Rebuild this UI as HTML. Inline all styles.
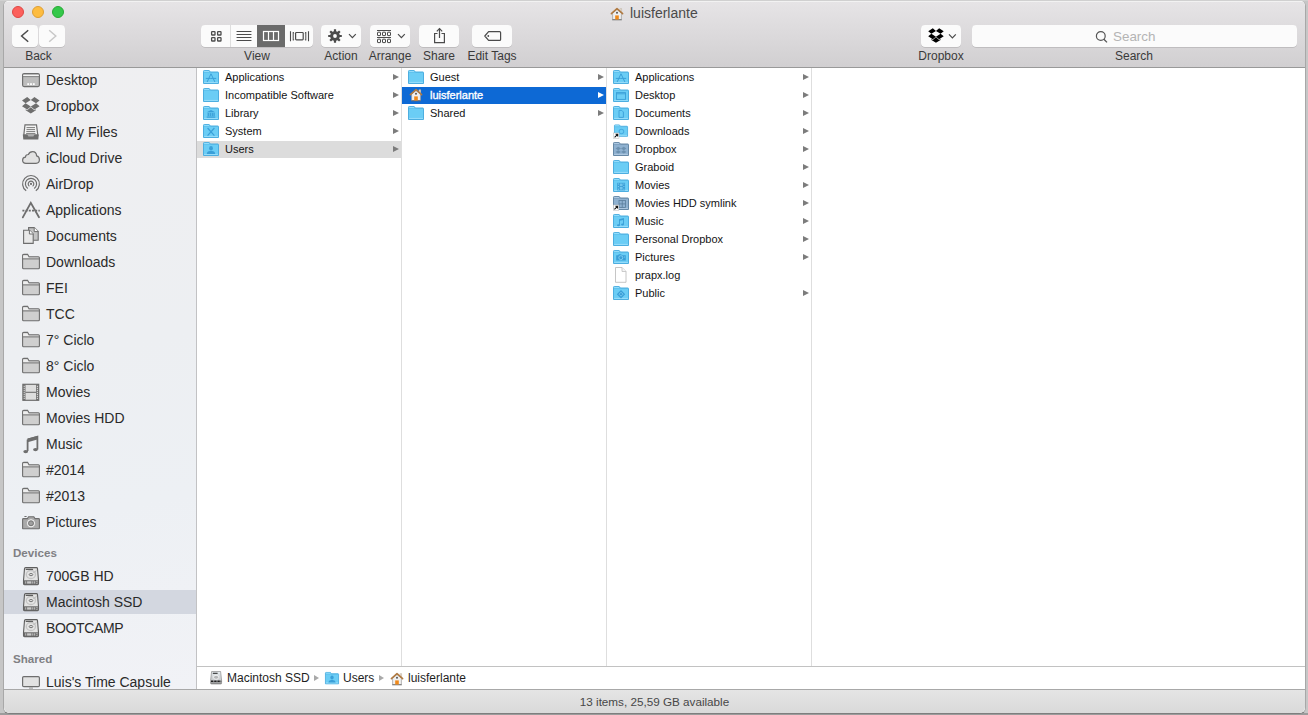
<!DOCTYPE html>
<html><head><meta charset="utf-8">
<style>
*{box-sizing:border-box}
html,body{margin:0;padding:0}
body{width:1308px;height:715px;overflow:hidden;position:relative;background:#c6c6c6;font-family:"Liberation Sans",sans-serif;color:#000}
.a{position:absolute}
svg{overflow:visible}
#frame{position:absolute;left:3px;top:1px;width:1303px;height:713px;border-radius:5px 5px 6px 6px;background:#fff;border:1px solid #a8a8a8;border-top:0;border-bottom-color:#7e7e7e}
#bstrip{position:absolute;left:0;top:713px;width:1308px;height:2px;background:#9c9c9c}
#tstrip{position:absolute;left:0;top:0;width:1308px;height:1px;background:#d0d0d0}
#toolbar{position:absolute;left:4px;top:1px;width:1301px;height:67px;border-radius:5px 5px 0 0;background:linear-gradient(#f2f2f2 0,#f2f2f2 1px,#e6e4e6 1px,#d1cfd1 100%);border-bottom:1px solid #999}
.tl{position:absolute;top:5px;width:12px;height:12px;border-radius:50%}
.btn{position:absolute;top:24px;height:22px;background:#fbfbfb;border-radius:4px;box-shadow:0 0.5px 0.6px rgba(0,0,0,0.22)}
.btn svg{position:absolute;left:0;top:0}
.lbl{position:absolute;top:48px;height:15px;line-height:15px;font-size:12px;color:#3a3a3a;text-align:center;white-space:nowrap}
#sidebar{position:absolute;left:4px;top:68px;width:193px;height:621px;background:linear-gradient(170deg,#efeff1 0%,#edeff2 45%,#edf0f4 70%,#f1f2f6 100%);border-right:1px solid #c2c2c4;overflow:hidden}
.si{position:absolute;left:0px;width:192px;height:26px;font-size:14px;color:#2a2a2a}
.si span{position:absolute;left:42px;top:3px;line-height:18px;white-space:nowrap}
.si svg{position:absolute;left:18px;top:4px}
.selrow{background:#d3d7e0;height:24px}
.sh{position:absolute;left:9px;font-size:11.6px;font-weight:bold;color:#808084;line-height:14px}
.col{position:absolute;top:68px;height:598px;border-right:1px solid #dedede;background:#fff;overflow:hidden}
.r{position:absolute;left:0;height:17px;width:204px;font-size:11px;color:#141414}
.r span{position:absolute;left:28px;top:2px;line-height:13px;white-space:nowrap}
.r svg{position:absolute;left:6px;top:1px}
.r .ar{position:absolute;left:196px;top:5px;width:0;height:0;border-left:6px solid #7c7c7c;border-top:3.5px solid transparent;border-bottom:3.5px solid transparent}
.sel{background:#0d69d5;color:#fff}
.sel span{-webkit-text-stroke:0.35px #fff}
.sel .ar{border-left-color:#fff}
.gr{background:#dcdcdc}
#pathbar{position:absolute;left:197px;top:666px;width:1108px;height:23px;background:#fff;border-top:1px solid #c2c2c2;font-size:12px;color:#1e1e1e}
#pathbar span{position:absolute;top:4px;line-height:14px;white-space:nowrap}
#pathbar svg{position:absolute}
.parr{position:absolute;top:8px;width:0;height:0;border-left:5px solid #a9a9a9;border-top:3.5px solid transparent;border-bottom:3.5px solid transparent}
#status{position:absolute;left:4px;top:689px;width:1301px;height:24px;border-radius:0 0 6px 6px;background:linear-gradient(#e5e5e5,#d9d9d9);border-top:1px solid #a8a8a8;font-size:11.7px;color:#474747}
</style></head><body>
<div id="tstrip"></div><div id="bstrip"></div><div id="frame"></div>
<div id="toolbar"><div class="tl" style="left:8px;background:#fc605c;border:0.6px solid #df4744"></div><div class="tl" style="left:28px;background:#fdbc40;border:0.6px solid #de9f34"></div><div class="tl" style="left:48px;background:#34c84a;border:0.6px solid #27aa35"></div><div class="a" style="left:607px;top:5px"><svg width="13" height="12" viewBox="0 0 13 12" style=""><rect x="9" y="0.8" width="1.8" height="3.4" fill="#ebe3d8" stroke="#b9ab9a" stroke-width="0.5"/><path d="M1.6 5.2L6 1.4L10.4 5.2V11.5H1.6Z" fill="#f0f0f0" stroke="#9c9c9c" stroke-width="0.7"/><path d="M0.4 5.6L6 0.6L11.6 5.6" fill="none" stroke="#b07a42" stroke-width="1.6" stroke-linejoin="round" stroke-linecap="round"/><path d="M1.2 11.8H10.8" stroke="#6a6a6a" stroke-width="0.9"/><rect x="4.2" y="7.4" width="3.6" height="4.1" fill="#f0891a"/><circle cx="6" cy="4.8" r="0.95" fill="#4a4a4a"/></svg></div><div class="a" style="left:626px;top:4px;font-size:14px;line-height:16px;color:#4a4a4a;white-space:nowrap">luisferlante</div><div class="btn" style="left:8px;width:26px"><svg width="26" height="22"><path d="M16.2 5.2L9.6 11L16.2 16.8" fill="none" stroke="#4b4b4b" stroke-width="1.5"/></svg></div><div class="btn" style="left:35px;width:26px"><svg width="26" height="22"><path d="M10.2 5.2L16.8 11L10.2 16.8" fill="none" stroke="#c9c9c9" stroke-width="1.5"/></svg></div><div class="lbl" style="left:8px;width:53px">Back</div><div class="btn" style="left:197px;width:112px;overflow:hidden"><div class="a" style="left:29px;top:0;width:1px;height:22px;background:#dedede"></div><div class="a" style="left:56px;top:0;width:28px;height:22px;background:#6b6b6b"></div><svg width="112" height="22"><g fill="none" stroke="#4b4b4b" stroke-width="1.3"><rect x="10.6" y="6.6" width="3.4" height="3.4" rx="0.6"/><rect x="16.6" y="6.6" width="3.4" height="3.4" rx="0.6"/><rect x="10.6" y="12.6" width="3.4" height="3.4" rx="0.6"/><rect x="16.6" y="12.6" width="3.4" height="3.4" rx="0.6"/><path d="M36 6.5H50M36 9.5H50M36 12.5H50M36 15.5H50" stroke-width="1.2" stroke-linecap="round"/></g><g fill="none" stroke="#fff" stroke-width="1.2"><rect x="62.5" y="6.5" width="15" height="9"/><path d="M67.5 6.5V15.5M72.5 6.5V15.5"/></g><g fill="none" stroke="#4b4b4b" stroke-width="1.1"><path d="M89.5 6.2V16.2M107.5 6.2V16.2"/><rect x="94.6" y="7.5" width="7.6" height="7.4" rx="0.8" stroke-width="1.2"/><path d="M92.2 7V15.4M104.8 7V15.4" stroke-width="1"/></g><g fill="#4b4b4b"><path d="M92 7L93.6 8.2H92Z M92 15.6L93.6 14.4H92Z M105 7L103.4 8.2H105Z M105 15.6L103.4 14.4H105Z"/></g></svg></div><div class="lbl" style="left:197px;width:112px">View</div><div class="btn" style="left:317px;width:40px"><svg width="40" height="22"><path d="M12.88 6.23L12.90 4.19L15.10 4.19L15.12 6.23L16.58 6.84L18.04 5.41L19.59 6.96L18.16 8.42L18.77 9.88L20.81 9.90L20.81 12.10L18.77 12.12L18.16 13.58L19.59 15.04L18.04 16.59L16.58 15.16L15.12 15.77L15.10 17.81L12.90 17.81L12.88 15.77L11.42 15.16L9.96 16.59L8.41 15.04L9.84 13.58L9.23 12.12L7.19 12.10L7.19 9.90L9.23 9.88L9.84 8.42L8.41 6.96L9.96 5.41L11.42 6.84Z" fill="#4b4b4b"/><circle cx="14" cy="11" r="1.9" fill="#fbfbfb"/><path d="M28 9.2L31.4 12.6L34.8 9.2" fill="none" stroke="#4b4b4b" stroke-width="1.2"/></svg></div><div class="lbl" style="left:312px;width:50px">Action</div><div class="btn" style="left:366px;width:40px"><svg width="40" height="22"><path d="M7 5.5H21M7 12.5H21" stroke="#4b4b4b" stroke-width="1"/><rect x="7.5" y="7.2" width="3" height="3.4" rx="0.4" fill="none" stroke="#4b4b4b" stroke-width="1"/><rect x="12.5" y="7.2" width="3" height="3.4" rx="0.4" fill="none" stroke="#4b4b4b" stroke-width="1"/><rect x="17.5" y="7.2" width="3" height="3.4" rx="0.4" fill="none" stroke="#4b4b4b" stroke-width="1"/><rect x="7.5" y="14.2" width="3" height="3.4" rx="0.4" fill="none" stroke="#4b4b4b" stroke-width="1"/><rect x="12.5" y="14.2" width="3" height="3.4" rx="0.4" fill="none" stroke="#4b4b4b" stroke-width="1"/><rect x="17.5" y="14.2" width="3" height="3.4" rx="0.4" fill="none" stroke="#4b4b4b" stroke-width="1"/><path d="M28 9.2L31.4 12.6L34.8 9.2" fill="none" stroke="#4b4b4b" stroke-width="1.2"/></svg></div><div class="lbl" style="left:361px;width:50px">Arrange</div><div class="btn" style="left:415px;width:40px"><svg width="40" height="22"><g fill="none" stroke="#4b4b4b" stroke-width="1.2"><path d="M18.5 8.5H15.6V17.6H25.4V8.5H22.5"/><path d="M20.5 3.6V13"/><path d="M17.8 6.4L20.5 3.6L23.2 6.4"/></g></svg></div><div class="lbl" style="left:410px;width:50px">Share</div><div class="btn" style="left:468px;width:40px"><svg width="40" height="22"><path d="M12.8 11L16.6 6.6H27.6Q28.6 6.6 28.6 7.6V14.4Q28.6 15.4 27.6 15.4H16.6Z" fill="none" stroke="#4b4b4b" stroke-width="1.2" stroke-linejoin="round"/><circle cx="16.3" cy="11" r="0.9" fill="#4b4b4b"/></svg></div><div class="lbl" style="left:458px;width:60px">Edit Tags</div><div class="btn" style="left:917px;width:40px"><svg width="40" height="22"><g transform="translate(7.2 3) scale(0.363)"><path fill="#000" d="M12.6 0.6L0 8.9l8.7 7 12.7-7.8zM0 22.9l12.6 8.3 8.8-7.3-12.7-7.9zm21.4 1l8.8 7.3 12.6-8.3-8.7-7zm21.4-15L30.2.6l-8.8 7.4 12.7 7.8zM21.4 25.5l-8.8 7.3-3.7-2.5v2.8l12.5 7.5 12.5-7.5v-2.8l-3.8 2.5z"/></g><path d="M28 9.4L31.4 12.8L34.8 9.4" fill="none" stroke="#4b4b4b" stroke-width="1.2"/></svg></div><div class="lbl" style="left:907px;width:60px">Dropbox</div><div class="btn" style="left:968px;width:325px"><svg width="325" height="22"><circle cx="128.8" cy="11" r="4.4" fill="none" stroke="#555" stroke-width="1.2"/><path d="M131.9 14.2L135 17.4" stroke="#555" stroke-width="1.3"/></svg></div><div class="a" style="left:1109px;top:28px;font-size:13.4px;line-height:16px;color:#b4b4b4">Search</div><div class="lbl" style="left:1090px;width:80px">Search</div></div>
<div id="sidebar"><div class="si" style="top:0px"><svg width="18" height="18" viewBox="0 0 18 18" style=""><rect x="0.6" y="1.6" width="16.8" height="13" rx="1.5" fill="#bdbdbd" stroke="#6e6e6e" stroke-width="1.2"/><path d="M1.2 3.6H16.8" stroke="#f4f4f4" stroke-width="1.6"/><path d="M1 4.6H17" stroke="#6e6e6e" stroke-width="0.8"/><rect x="5.3" y="11.2" width="1.8" height="1.8" fill="#fff"/><rect x="8.1" y="11.2" width="1.8" height="1.8" fill="#fff"/><rect x="10.9" y="11.2" width="1.8" height="1.8" fill="#fff"/></svg><span>Desktop</span></div>
<div class="si" style="top:26px"><svg width="18" height="18" viewBox="0 0 18 18" style=""><g fill="#6e6e6e" transform="translate(0 -1.25) scale(0.411)"><path d="M12.6 0.6L0 8.9l8.7 7 12.7-7.8zM0 22.9l12.6 8.3 8.8-7.3-12.7-7.9zm21.4 1l8.8 7.3 12.6-8.3-8.7-7zm21.4-15L30.2.6l-8.8 7.4 12.7 7.8zM21.4 25.5l-8.8 7.3-3.7-2.5v2.8l12.5 7.5 12.5-7.5v-2.8l-3.8 2.5z"/></g></svg><span>Dropbox</span></div>
<div class="si" style="top:52px"><svg width="18" height="18" viewBox="0 0 18 18" style=""><path d="M3 0.8H14.5L15.8 11H1.8Z" fill="#f4f4f4" stroke="#6e6e6e" stroke-width="1.2"/><g stroke="#6e6e6e" stroke-width="0.9"><path d="M4.5 3.6H13M4.5 5.6H13M4.3 7.6H13.2M4.1 9.6H13.4"/></g><path d="M0.8 10.6H5.2L6.4 12.2H11.4L12.6 10.6H16.8L16.3 15.6H1.3Z" fill="#6e6e6e"/></svg><span>All My Files</span></div>
<div class="si" style="top:78px"><svg width="18" height="18" viewBox="0 0 18 18" style=""><path d="M4 13.3Q0.6 13.3 0.6 10.3Q0.6 7.5 3.4 7.2Q3.6 4.5 6.4 4.5Q7.6 1.6 10.6 1.6Q14.4 1.6 14.6 5.9Q17.4 6.6 17.4 9.8Q17.4 13.3 14 13.3Z" fill="#e2e2e2" stroke="#6e6e6e" stroke-width="1.2"/></svg><span>iCloud Drive</span></div>
<div class="si" style="top:104px"><svg width="18" height="18" viewBox="0 0 18 18" style=""><g fill="none" stroke="#6e6e6e" stroke-width="1.2"><path d="M4.18 14.78A8.4 8.4 0 1 1 13.82 14.78"/><path d="M5.79 12.49A5.6 5.6 0 1 1 12.21 12.49"/><path d="M7.39 10.19A2.8 2.8 0 1 1 10.61 10.19"/></g><circle cx="9" cy="7.9" r="1.1" fill="#6e6e6e"/></svg><span>AirDrop</span></div>
<div class="si" style="top:130px"><svg width="18" height="18" viewBox="0 0 18 18" style=""><g stroke="#6e6e6e" stroke-width="1.8" stroke-linecap="round" fill="none"><path d="M0.8 15.4L8.8 0.8L17 15.2"/></g><path d="M0.4 8.6H17.8" stroke="#6e6e6e" stroke-width="1.6" stroke-dasharray="2 1.2"/></svg><span>Applications</span></div>
<div class="si" style="top:156px"><svg width="18" height="18" viewBox="0 0 18 18" style=""><path d="M6.6 -0.4H12.2L16.2 3.6V12.2H6.6Z" fill="#c4c4c4" stroke="#6e6e6e" stroke-width="1.1"/><path d="M12.2 -0.4V3.6H16.2" fill="#fff" stroke="#6e6e6e" stroke-width="1"/><path d="M1.6 2.2H7.4L11.2 6V15.4H1.6Z" fill="#e8e8e8" stroke="#6e6e6e" stroke-width="1.1"/><path d="M7.4 2.2V6H11.2" fill="#fff" stroke="#6e6e6e" stroke-width="1"/></svg><span>Documents</span></div>
<div class="si" style="top:182px"><svg width="18" height="18" viewBox="0 0 18 18" style=""><g transform="translate(0 -0.7)"><path d="M0.6 2.4Q0.6 1.1 1.8 1.1H5.6L7 3.5H16.4Q17.4 3.5 17.4 4.5V14.4Q17.4 15.4 16.4 15.4H1.6Q0.6 15.4 0.6 14.4Z" fill="#cfcfcf" stroke="#6e6e6e" stroke-width="1.1"/><path d="M1.2 2.3H5.4L6.8 4.6H16.8V5.3H1.2Z" fill="#eeeeee"/><path d="M0.8 5.6H17.2" stroke="#6e6e6e" stroke-width="1"/></g></svg><span>Downloads</span></div>
<div class="si" style="top:208px"><svg width="18" height="18" viewBox="0 0 18 18" style=""><g transform="translate(0 -0.7)"><path d="M0.6 2.4Q0.6 1.1 1.8 1.1H5.6L7 3.5H16.4Q17.4 3.5 17.4 4.5V14.4Q17.4 15.4 16.4 15.4H1.6Q0.6 15.4 0.6 14.4Z" fill="#cfcfcf" stroke="#6e6e6e" stroke-width="1.1"/><path d="M1.2 2.3H5.4L6.8 4.6H16.8V5.3H1.2Z" fill="#eeeeee"/><path d="M0.8 5.6H17.2" stroke="#6e6e6e" stroke-width="1"/></g></svg><span>FEI</span></div>
<div class="si" style="top:234px"><svg width="18" height="18" viewBox="0 0 18 18" style=""><g transform="translate(0 -0.7)"><path d="M0.6 2.4Q0.6 1.1 1.8 1.1H5.6L7 3.5H16.4Q17.4 3.5 17.4 4.5V14.4Q17.4 15.4 16.4 15.4H1.6Q0.6 15.4 0.6 14.4Z" fill="#cfcfcf" stroke="#6e6e6e" stroke-width="1.1"/><path d="M1.2 2.3H5.4L6.8 4.6H16.8V5.3H1.2Z" fill="#eeeeee"/><path d="M0.8 5.6H17.2" stroke="#6e6e6e" stroke-width="1"/></g></svg><span>TCC</span></div>
<div class="si" style="top:260px"><svg width="18" height="18" viewBox="0 0 18 18" style=""><g transform="translate(0 -0.7)"><path d="M0.6 2.4Q0.6 1.1 1.8 1.1H5.6L7 3.5H16.4Q17.4 3.5 17.4 4.5V14.4Q17.4 15.4 16.4 15.4H1.6Q0.6 15.4 0.6 14.4Z" fill="#cfcfcf" stroke="#6e6e6e" stroke-width="1.1"/><path d="M1.2 2.3H5.4L6.8 4.6H16.8V5.3H1.2Z" fill="#eeeeee"/><path d="M0.8 5.6H17.2" stroke="#6e6e6e" stroke-width="1"/></g></svg><span>7° Ciclo</span></div>
<div class="si" style="top:286px"><svg width="18" height="18" viewBox="0 0 18 18" style=""><g transform="translate(0 -0.7)"><path d="M0.6 2.4Q0.6 1.1 1.8 1.1H5.6L7 3.5H16.4Q17.4 3.5 17.4 4.5V14.4Q17.4 15.4 16.4 15.4H1.6Q0.6 15.4 0.6 14.4Z" fill="#cfcfcf" stroke="#6e6e6e" stroke-width="1.1"/><path d="M1.2 2.3H5.4L6.8 4.6H16.8V5.3H1.2Z" fill="#eeeeee"/><path d="M0.8 5.6H17.2" stroke="#6e6e6e" stroke-width="1"/></g></svg><span>8° Ciclo</span></div>
<div class="si" style="top:312px"><svg width="18" height="18" viewBox="0 0 18 18" style=""><rect x="0.9" y="0.3" width="15.8" height="16" fill="#dedede" stroke="#6e6e6e" stroke-width="1.2"/><rect x="0.9" y="0.3" width="2.6" height="16" fill="#6e6e6e"/><rect x="14.1" y="0.3" width="2.6" height="16" fill="#6e6e6e"/><path d="M2.2 1.8V15M15.4 1.8V15" stroke="#fff" stroke-width="1" stroke-dasharray="1 1"/><path d="M3.5 8.3H14.1" stroke="#6e6e6e" stroke-width="1.1"/></svg><span>Movies</span></div>
<div class="si" style="top:338px"><svg width="18" height="18" viewBox="0 0 18 18" style=""><g transform="translate(0 -0.7)"><path d="M0.6 2.4Q0.6 1.1 1.8 1.1H5.6L7 3.5H16.4Q17.4 3.5 17.4 4.5V14.4Q17.4 15.4 16.4 15.4H1.6Q0.6 15.4 0.6 14.4Z" fill="#cfcfcf" stroke="#6e6e6e" stroke-width="1.1"/><path d="M1.2 2.3H5.4L6.8 4.6H16.8V5.3H1.2Z" fill="#eeeeee"/><path d="M0.8 5.6H17.2" stroke="#6e6e6e" stroke-width="1"/></g></svg><span>Movies HDD</span></div>
<div class="si" style="top:364px"><svg width="18" height="18" viewBox="0 0 18 18" style=""><path d="M5.6 3.6L15.4 0.6V13.4" fill="none" stroke="#6e6e6e" stroke-width="1.8"/><path d="M5.6 3.6V15" stroke="#6e6e6e" stroke-width="1.8"/><path d="M5.6 2.6L15.4 0V3.6L5.6 6.2Z" fill="#6e6e6e"/><ellipse cx="3.7" cy="15.6" rx="2.4" ry="1.7" fill="#6e6e6e"/><ellipse cx="13.5" cy="13.6" rx="2.4" ry="1.7" fill="#6e6e6e"/></svg><span>Music</span></div>
<div class="si" style="top:390px"><svg width="18" height="18" viewBox="0 0 18 18" style=""><g transform="translate(0 -0.7)"><path d="M0.6 2.4Q0.6 1.1 1.8 1.1H5.6L7 3.5H16.4Q17.4 3.5 17.4 4.5V14.4Q17.4 15.4 16.4 15.4H1.6Q0.6 15.4 0.6 14.4Z" fill="#cfcfcf" stroke="#6e6e6e" stroke-width="1.1"/><path d="M1.2 2.3H5.4L6.8 4.6H16.8V5.3H1.2Z" fill="#eeeeee"/><path d="M0.8 5.6H17.2" stroke="#6e6e6e" stroke-width="1"/></g></svg><span>#2014</span></div>
<div class="si" style="top:416px"><svg width="18" height="18" viewBox="0 0 18 18" style=""><g transform="translate(0 -0.7)"><path d="M0.6 2.4Q0.6 1.1 1.8 1.1H5.6L7 3.5H16.4Q17.4 3.5 17.4 4.5V14.4Q17.4 15.4 16.4 15.4H1.6Q0.6 15.4 0.6 14.4Z" fill="#cfcfcf" stroke="#6e6e6e" stroke-width="1.1"/><path d="M1.2 2.3H5.4L6.8 4.6H16.8V5.3H1.2Z" fill="#eeeeee"/><path d="M0.8 5.6H17.2" stroke="#6e6e6e" stroke-width="1"/></g></svg><span>#2013</span></div>
<div class="si" style="top:442px"><svg width="18" height="18" viewBox="0 0 18 18" style=""><path d="M1.5 4.6H5.4L6.6 2.8H11.8L13 4.6H16.6Q17.4 4.6 17.4 5.4V14.2Q17.4 14.8 16.8 14.8H1.2Q0.6 14.8 0.6 14.2V5.4Q0.6 4.6 1.5 4.6Z" fill="#a9a9a9" stroke="#6e6e6e" stroke-width="1.1"/><circle cx="9" cy="9.3" r="3.6" fill="#a9a9a9" stroke="#fff" stroke-width="0.9"/><circle cx="9" cy="9.3" r="2.4" fill="#a0a0a0" stroke="#6e6e6e" stroke-width="0.8"/><rect x="2.4" y="2" width="2.2" height="1" fill="#6e6e6e"/></svg><span>Pictures</span></div>
<div class="sh" style="top:478px">Devices</div>
<div class="si" style="top:496px"><svg width="18" height="18" viewBox="0 0 18 18" style="top:3px"><path d="M3.6 0.6H14.4Q15.4 0.6 15.5 1.6L16.5 13.4V16.6Q16.5 17.6 15.5 17.6H2.5Q1.5 17.6 1.5 16.6V13.4L2.5 1.6Q2.6 0.6 3.6 0.6Z" fill="#e4e4e4" stroke="#5e5e5e" stroke-width="1.1"/><path d="M1.6 13.2H16.4V16.6Q16.4 17.5 15.5 17.5H2.5Q1.6 17.5 1.6 16.6Z" fill="#6c6c6c"/><g fill="#c9c9c9"><rect x="3.3" y="14.3" width="0.9" height="2.3"/><rect x="5.1" y="14.3" width="4.3" height="2.3"/><rect x="10.3" y="14.3" width="1" height="2.3"/><rect x="12.2" y="14.3" width="1" height="2.3"/><rect x="14.1" y="14.3" width="1.6" height="2.3"/></g><circle cx="14.9" cy="15.4" r="0.55" fill="#444"/><ellipse cx="8.9" cy="7.5" rx="4.6" ry="4" fill="none" stroke="#c4c4c4" stroke-width="1.3"/><ellipse cx="9" cy="7.6" rx="1.8" ry="1.1" fill="none" stroke="#6a6a6a" stroke-width="0.9"/><path d="M4.2 2.4H10.6" stroke="#5e5e5e" stroke-width="1.1" stroke-linecap="round"/><path d="M14.4 2.6Q14.6 5.2 11 5.6" fill="none" stroke="#b8b8b8" stroke-width="0.8"/></svg><span>700GB HD</span></div>
<div class="si selrow" style="top:522px"><svg width="18" height="18" viewBox="0 0 18 18" style="top:3px"><path d="M3.6 0.6H14.4Q15.4 0.6 15.5 1.6L16.5 13.4V16.6Q16.5 17.6 15.5 17.6H2.5Q1.5 17.6 1.5 16.6V13.4L2.5 1.6Q2.6 0.6 3.6 0.6Z" fill="#e4e4e4" stroke="#5e5e5e" stroke-width="1.1"/><path d="M1.6 13.2H16.4V16.6Q16.4 17.5 15.5 17.5H2.5Q1.6 17.5 1.6 16.6Z" fill="#6c6c6c"/><g fill="#c9c9c9"><rect x="3.3" y="14.3" width="0.9" height="2.3"/><rect x="5.1" y="14.3" width="4.3" height="2.3"/><rect x="10.3" y="14.3" width="1" height="2.3"/><rect x="12.2" y="14.3" width="1" height="2.3"/><rect x="14.1" y="14.3" width="1.6" height="2.3"/></g><circle cx="14.9" cy="15.4" r="0.55" fill="#444"/><ellipse cx="8.9" cy="7.5" rx="4.6" ry="4" fill="none" stroke="#c4c4c4" stroke-width="1.3"/><ellipse cx="9" cy="7.6" rx="1.8" ry="1.1" fill="none" stroke="#6a6a6a" stroke-width="0.9"/><path d="M4.2 2.4H10.6" stroke="#5e5e5e" stroke-width="1.1" stroke-linecap="round"/><path d="M14.4 2.6Q14.6 5.2 11 5.6" fill="none" stroke="#b8b8b8" stroke-width="0.8"/></svg><span>Macintosh SSD</span></div>
<div class="si" style="top:548px"><svg width="18" height="18" viewBox="0 0 18 18" style="top:3px"><path d="M3.6 0.6H14.4Q15.4 0.6 15.5 1.6L16.5 13.4V16.6Q16.5 17.6 15.5 17.6H2.5Q1.5 17.6 1.5 16.6V13.4L2.5 1.6Q2.6 0.6 3.6 0.6Z" fill="#e4e4e4" stroke="#5e5e5e" stroke-width="1.1"/><path d="M1.6 13.2H16.4V16.6Q16.4 17.5 15.5 17.5H2.5Q1.6 17.5 1.6 16.6Z" fill="#6c6c6c"/><g fill="#c9c9c9"><rect x="3.3" y="14.3" width="0.9" height="2.3"/><rect x="5.1" y="14.3" width="4.3" height="2.3"/><rect x="10.3" y="14.3" width="1" height="2.3"/><rect x="12.2" y="14.3" width="1" height="2.3"/><rect x="14.1" y="14.3" width="1.6" height="2.3"/></g><circle cx="14.9" cy="15.4" r="0.55" fill="#444"/><ellipse cx="8.9" cy="7.5" rx="4.6" ry="4" fill="none" stroke="#c4c4c4" stroke-width="1.3"/><ellipse cx="9" cy="7.6" rx="1.8" ry="1.1" fill="none" stroke="#6a6a6a" stroke-width="0.9"/><path d="M4.2 2.4H10.6" stroke="#5e5e5e" stroke-width="1.1" stroke-linecap="round"/><path d="M14.4 2.6Q14.6 5.2 11 5.6" fill="none" stroke="#b8b8b8" stroke-width="0.8"/></svg><span style="letter-spacing:-0.35px">BOOTCAMP</span></div>
<div class="sh" style="top:584px">Shared</div>
<div class="si" style="top:602px"><svg width="18" height="18" viewBox="0 0 18 18" style="top:6px"><rect x="0.6" y="0.6" width="16.8" height="10" rx="1.2" fill="#e2e2e2" stroke="#6e6e6e" stroke-width="1.2"/><rect x="7" y="11.2" width="4" height="1.6" fill="#b0b0b0"/></svg><span>Luis's Time Capsule</span></div></div>
<div class="col" style="left:197px;width:205px;"><div class="r" style="top:1px"><svg width="16" height="14" viewBox="0 0 16 14" style=""><path d="M0.5 1.3Q0.5 0.5 1.3 0.5H6.2L7.4 2H14.9Q15.5 2 15.5 2.6V13.5H0.5Z" fill="#6bcdf5" stroke="#4daee0" stroke-width="1"/><path d="M1.2 1.4H6" stroke="#9ee0fb" stroke-width="0.9"/><path d="M1.1 12.4H14.9" stroke="#9ee0fb" stroke-width="0.9"/><path d="M1 2.6H15" stroke="#4daee0" stroke-width="0.6" opacity="0.6"/><g stroke="#3a9fd8" stroke-width="1" fill="none" stroke-linecap="round"><path d="M4.3 11.6L8 3.8L11.7 11.6"/><path d="M3.2 8.4H12.8" stroke-dasharray="1.6 0.7"/></g></svg><span>Applications</span><i class="ar"></i></div>
<div class="r" style="top:19px"><svg width="16" height="14" viewBox="0 0 16 14" style=""><path d="M0.5 1.3Q0.5 0.5 1.3 0.5H6.2L7.4 2H14.9Q15.5 2 15.5 2.6V13.5H0.5Z" fill="#6bcdf5" stroke="#4daee0" stroke-width="1"/><path d="M1.2 1.4H6" stroke="#9ee0fb" stroke-width="0.9"/><path d="M1.1 12.4H14.9" stroke="#9ee0fb" stroke-width="0.9"/><path d="M1 2.6H15" stroke="#4daee0" stroke-width="0.6" opacity="0.6"/></svg><span>Incompatible Software</span><i class="ar"></i></div>
<div class="r" style="top:37px"><svg width="16" height="14" viewBox="0 0 16 14" style=""><path d="M0.5 1.3Q0.5 0.5 1.3 0.5H6.2L7.4 2H14.9Q15.5 2 15.5 2.6V13.5H0.5Z" fill="#6bcdf5" stroke="#4daee0" stroke-width="1"/><path d="M1.2 1.4H6" stroke="#9ee0fb" stroke-width="0.9"/><path d="M1.1 12.4H14.9" stroke="#9ee0fb" stroke-width="0.9"/><path d="M1 2.6H15" stroke="#4daee0" stroke-width="0.6" opacity="0.6"/><g fill="#3a9fd8"><path d="M8 3.9L12.3 6.2H3.7Z"/><rect x="3.7" y="10.5" width="8.6" height="1.2"/><rect x="4.6" y="6.8" width="1.3" height="3.4"/><rect x="6.6" y="6.8" width="1.3" height="3.4"/><rect x="8.6" y="6.8" width="1.3" height="3.4"/><rect x="10.4" y="6.8" width="1.3" height="3.4"/></g></svg><span>Library</span><i class="ar"></i></div>
<div class="r" style="top:55px"><svg width="16" height="14" viewBox="0 0 16 14" style=""><path d="M0.5 1.3Q0.5 0.5 1.3 0.5H6.2L7.4 2H14.9Q15.5 2 15.5 2.6V13.5H0.5Z" fill="#6bcdf5" stroke="#4daee0" stroke-width="1"/><path d="M1.2 1.4H6" stroke="#9ee0fb" stroke-width="0.9"/><path d="M1.1 12.4H14.9" stroke="#9ee0fb" stroke-width="0.9"/><path d="M1 2.6H15" stroke="#4daee0" stroke-width="0.6" opacity="0.6"/><path d="M4.6 4L11.4 11.7M11.4 4L4.6 11.7" stroke="#3a9fd8" stroke-width="1.2"/></svg><span>System</span><i class="ar"></i></div>
<div class="r gr" style="top:73px"><svg width="16" height="14" viewBox="0 0 16 14" style=""><path d="M0.5 1.3Q0.5 0.5 1.3 0.5H6.2L7.4 2H14.9Q15.5 2 15.5 2.6V13.5H0.5Z" fill="#6bcdf5" stroke="#4daee0" stroke-width="1"/><path d="M1.2 1.4H6" stroke="#9ee0fb" stroke-width="0.9"/><path d="M1.1 12.4H14.9" stroke="#9ee0fb" stroke-width="0.9"/><path d="M1 2.6H15" stroke="#4daee0" stroke-width="0.6" opacity="0.6"/><g fill="#3a9fd8"><ellipse cx="8" cy="6.3" rx="1.9" ry="2.3"/><path d="M3.8 11.9Q4 9.3 7 9H9Q12 9.3 12.2 11.9Z"/></g></svg><span>Users</span><i class="ar"></i></div></div>
<div class="col" style="left:402px;width:205px;"><div class="r" style="top:1px"><svg width="16" height="14" viewBox="0 0 16 14" style=""><path d="M0.5 1.3Q0.5 0.5 1.3 0.5H6.2L7.4 2H14.9Q15.5 2 15.5 2.6V13.5H0.5Z" fill="#6bcdf5" stroke="#4daee0" stroke-width="1"/><path d="M1.2 1.4H6" stroke="#9ee0fb" stroke-width="0.9"/><path d="M1.1 12.4H14.9" stroke="#9ee0fb" stroke-width="0.9"/><path d="M1 2.6H15" stroke="#4daee0" stroke-width="0.6" opacity="0.6"/></svg><span>Guest</span><i class="ar"></i></div>
<div class="r sel" style="top:19px"><svg width="13" height="12" viewBox="0 0 13 12" style="left:8px;top:2px"><rect x="9" y="0.8" width="1.8" height="3.4" fill="#ebe3d8" stroke="#b9ab9a" stroke-width="0.5"/><path d="M1.6 5.2L6 1.4L10.4 5.2V11.5H1.6Z" fill="#f0f0f0" stroke="#9c9c9c" stroke-width="0.7"/><path d="M0.4 5.6L6 0.6L11.6 5.6" fill="none" stroke="#b07a42" stroke-width="1.6" stroke-linejoin="round" stroke-linecap="round"/><path d="M1.2 11.8H10.8" stroke="#6a6a6a" stroke-width="0.9"/><rect x="4.2" y="7.4" width="3.6" height="4.1" fill="#f0891a"/><circle cx="6" cy="4.8" r="0.95" fill="#4a4a4a"/></svg><span>luisferlante</span><i class="ar"></i></div>
<div class="r" style="top:37px"><svg width="16" height="14" viewBox="0 0 16 14" style=""><path d="M0.5 1.3Q0.5 0.5 1.3 0.5H6.2L7.4 2H14.9Q15.5 2 15.5 2.6V13.5H0.5Z" fill="#6bcdf5" stroke="#4daee0" stroke-width="1"/><path d="M1.2 1.4H6" stroke="#9ee0fb" stroke-width="0.9"/><path d="M1.1 12.4H14.9" stroke="#9ee0fb" stroke-width="0.9"/><path d="M1 2.6H15" stroke="#4daee0" stroke-width="0.6" opacity="0.6"/></svg><span>Shared</span><i class="ar"></i></div></div>
<div class="col" style="left:607px;width:205px;"><div class="r" style="top:1px"><svg width="16" height="14" viewBox="0 0 16 14" style=""><path d="M0.5 1.3Q0.5 0.5 1.3 0.5H6.2L7.4 2H14.9Q15.5 2 15.5 2.6V13.5H0.5Z" fill="#6bcdf5" stroke="#4daee0" stroke-width="1"/><path d="M1.2 1.4H6" stroke="#9ee0fb" stroke-width="0.9"/><path d="M1.1 12.4H14.9" stroke="#9ee0fb" stroke-width="0.9"/><path d="M1 2.6H15" stroke="#4daee0" stroke-width="0.6" opacity="0.6"/><g stroke="#3a9fd8" stroke-width="1" fill="none" stroke-linecap="round"><path d="M4.3 11.6L8 3.8L11.7 11.6"/><path d="M3.2 8.4H12.8" stroke-dasharray="1.6 0.7"/></g></svg><span>Applications</span><i class="ar"></i></div>
<div class="r" style="top:19px"><svg width="16" height="14" viewBox="0 0 16 14" style=""><path d="M0.5 1.3Q0.5 0.5 1.3 0.5H6.2L7.4 2H14.9Q15.5 2 15.5 2.6V13.5H0.5Z" fill="#6bcdf5" stroke="#4daee0" stroke-width="1"/><path d="M1.2 1.4H6" stroke="#9ee0fb" stroke-width="0.9"/><path d="M1.1 12.4H14.9" stroke="#9ee0fb" stroke-width="0.9"/><path d="M1 2.6H15" stroke="#4daee0" stroke-width="0.6" opacity="0.6"/><g stroke="#3a9fd8" fill="none" stroke-width="0.9"><rect x="3.5" y="4.6" width="9" height="6.8"/><path d="M3.5 5.8H12.5"/></g></svg><span>Desktop</span><i class="ar"></i></div>
<div class="r" style="top:37px"><svg width="16" height="14" viewBox="0 0 16 14" style=""><path d="M0.5 1.3Q0.5 0.5 1.3 0.5H6.2L7.4 2H14.9Q15.5 2 15.5 2.6V13.5H0.5Z" fill="#6bcdf5" stroke="#4daee0" stroke-width="1"/><path d="M1.2 1.4H6" stroke="#9ee0fb" stroke-width="0.9"/><path d="M1.1 12.4H14.9" stroke="#9ee0fb" stroke-width="0.9"/><path d="M1 2.6H15" stroke="#4daee0" stroke-width="0.6" opacity="0.6"/><path d="M6 4.4H8.8L10.4 6V11.4H6Z" fill="none" stroke="#3a9fd8" stroke-width="0.9"/></svg><span>Documents</span><i class="ar"></i></div>
<div class="r" style="top:55px"><svg width="16" height="14" viewBox="0 0 16 14" style=""><g transform="translate(1 0.5) scale(0.875)"><path d="M0.5 1.3Q0.5 0.5 1.3 0.5H6.2L7.4 2H14.9Q15.5 2 15.5 2.6V13.5H0.5Z" fill="#6bcdf5" stroke="#4daee0" stroke-width="1"/><path d="M1.2 1.4H6" stroke="#9ee0fb" stroke-width="0.9"/><path d="M1.1 12.4H14.9" stroke="#9ee0fb" stroke-width="0.9"/><path d="M1 2.6H15" stroke="#4daee0" stroke-width="0.6" opacity="0.6"/><circle cx="8.5" cy="8" r="2.6" fill="none" stroke="#3a9fd8" stroke-width="1.2" opacity="0.7"/></g><rect x="0.5" y="9" width="5.5" height="5.5" fill="#fff" stroke="#bbb" stroke-width="0.5"/><path d="M1.6 13.4L4.6 10.4M2.6 10.3H4.7V12.4" stroke="#111" stroke-width="1.1" fill="none"/></svg><span>Downloads</span><i class="ar"></i></div>
<div class="r" style="top:73px"><svg width="16" height="14" viewBox="0 0 16 14" style=""><path d="M0.5 1.3Q0.5 0.5 1.3 0.5H6.2L7.4 2H14.9Q15.5 2 15.5 2.6V13.5H0.5Z" fill="#8fb1d0" stroke="#6688a6" stroke-width="1"/><path d="M1.2 1.4H6" stroke="#b3cde3" stroke-width="0.9"/><path d="M1.1 12.4H14.9" stroke="#b3cde3" stroke-width="0.9"/><path d="M1 2.6H15" stroke="#6688a6" stroke-width="0.6" opacity="0.6"/><g fill="#6489a8" opacity="0.8"><path d="M5.2 4.8L8 6.5L5.2 8.2L2.6 6.5Z"/><path d="M10.8 4.8L13.4 6.5L10.8 8.2L8 6.5Z"/><path d="M5.2 8.2L8 9.9L5.2 11.6L2.6 9.9Z" transform="translate(0 0)"/><path d="M10.8 8.2L13.4 9.9L10.8 11.6L8 9.9Z"/></g></svg><span>Dropbox</span><i class="ar"></i></div>
<div class="r" style="top:91px"><svg width="16" height="14" viewBox="0 0 16 14" style=""><path d="M0.5 1.3Q0.5 0.5 1.3 0.5H6.2L7.4 2H14.9Q15.5 2 15.5 2.6V13.5H0.5Z" fill="#6bcdf5" stroke="#4daee0" stroke-width="1"/><path d="M1.2 1.4H6" stroke="#9ee0fb" stroke-width="0.9"/><path d="M1.1 12.4H14.9" stroke="#9ee0fb" stroke-width="0.9"/><path d="M1 2.6H15" stroke="#4daee0" stroke-width="0.6" opacity="0.6"/></svg><span>Graboid</span><i class="ar"></i></div>
<div class="r" style="top:109px"><svg width="16" height="14" viewBox="0 0 16 14" style=""><path d="M0.5 1.3Q0.5 0.5 1.3 0.5H6.2L7.4 2H14.9Q15.5 2 15.5 2.6V13.5H0.5Z" fill="#6bcdf5" stroke="#4daee0" stroke-width="1"/><path d="M1.2 1.4H6" stroke="#9ee0fb" stroke-width="0.9"/><path d="M1.1 12.4H14.9" stroke="#9ee0fb" stroke-width="0.9"/><path d="M1 2.6H15" stroke="#4daee0" stroke-width="0.6" opacity="0.6"/><rect x="4.2" y="4.8" width="7.9" height="7.6" fill="#3a9fd8"/><g fill="#8ad6f6"><rect x="4.9" y="5.5" width="1" height="1"/><rect x="4.9" y="8.1" width="1" height="1"/><rect x="4.9" y="10.7" width="1" height="1"/><rect x="10.4" y="5.5" width="1" height="1"/><rect x="10.4" y="8.1" width="1" height="1"/><rect x="10.4" y="10.7" width="1" height="1"/><rect x="6.8" y="5.5" width="2.8" height="2.6" opacity="0.7"/><rect x="6.8" y="9" width="2.8" height="2.6" opacity="0.7"/></g></svg><span>Movies</span><i class="ar"></i></div>
<div class="r" style="top:127px"><svg width="16" height="14" viewBox="0 0 16 14" style=""><path d="M0.5 1.3Q0.5 0.5 1.3 0.5H6.2L7.4 2H14.9Q15.5 2 15.5 2.6V13.5H0.5Z" fill="#8fb1d0" stroke="#6688a6" stroke-width="1"/><path d="M1.2 1.4H6" stroke="#b3cde3" stroke-width="0.9"/><path d="M1.1 12.4H14.9" stroke="#b3cde3" stroke-width="0.9"/><path d="M1 2.6H15" stroke="#6688a6" stroke-width="0.6" opacity="0.6"/><g fill="none" stroke="#5a7e9c" stroke-width="0.8"><rect x="6" y="4.4" width="6.5" height="7"/><path d="M9.25 4.4V11.4M6 7.9H12.5"/></g><rect x="0.3" y="9" width="5.5" height="5.5" fill="#fff" stroke="#bbb" stroke-width="0.5"/><path d="M1.4 13.4L4.4 10.4M2.4 10.3H4.5V12.4" stroke="#111" stroke-width="1.1" fill="none"/></svg><span>Movies HDD symlink</span><i class="ar"></i></div>
<div class="r" style="top:145px"><svg width="16" height="14" viewBox="0 0 16 14" style=""><path d="M0.5 1.3Q0.5 0.5 1.3 0.5H6.2L7.4 2H14.9Q15.5 2 15.5 2.6V13.5H0.5Z" fill="#6bcdf5" stroke="#4daee0" stroke-width="1"/><path d="M1.2 1.4H6" stroke="#9ee0fb" stroke-width="0.9"/><path d="M1.1 12.4H14.9" stroke="#9ee0fb" stroke-width="0.9"/><path d="M1 2.6H15" stroke="#4daee0" stroke-width="0.6" opacity="0.6"/><g fill="#3a9fd8"><path d="M6 5.2L11 4V10.6H10.1V6L6.9 6.7V11.4H6Z"/><ellipse cx="5.4" cy="11.3" rx="1.4" ry="1.05"/><ellipse cx="9.5" cy="10.5" rx="1.4" ry="1.05"/></g></svg><span>Music</span><i class="ar"></i></div>
<div class="r" style="top:163px"><svg width="16" height="14" viewBox="0 0 16 14" style=""><path d="M0.5 1.3Q0.5 0.5 1.3 0.5H6.2L7.4 2H14.9Q15.5 2 15.5 2.6V13.5H0.5Z" fill="#6bcdf5" stroke="#4daee0" stroke-width="1"/><path d="M1.2 1.4H6" stroke="#9ee0fb" stroke-width="0.9"/><path d="M1.1 12.4H14.9" stroke="#9ee0fb" stroke-width="0.9"/><path d="M1 2.6H15" stroke="#4daee0" stroke-width="0.6" opacity="0.6"/></svg><span>Personal Dropbox</span><i class="ar"></i></div>
<div class="r" style="top:181px"><svg width="16" height="14" viewBox="0 0 16 14" style=""><path d="M0.5 1.3Q0.5 0.5 1.3 0.5H6.2L7.4 2H14.9Q15.5 2 15.5 2.6V13.5H0.5Z" fill="#6bcdf5" stroke="#4daee0" stroke-width="1"/><path d="M1.2 1.4H6" stroke="#9ee0fb" stroke-width="0.9"/><path d="M1.1 12.4H14.9" stroke="#9ee0fb" stroke-width="0.9"/><path d="M1 2.6H15" stroke="#4daee0" stroke-width="0.6" opacity="0.6"/><path d="M3.2 5.2H5.2L5.8 4.2H8.2L8.8 5.2H12.8V10.6H3.2Z" fill="#3a9fd8"/><circle cx="7.8" cy="7.7" r="2" fill="none" stroke="#8ad6f6" stroke-width="0.8"/><rect x="11.2" y="6.6" width="0.9" height="0.9" fill="#8ad6f6"/></svg><span>Pictures</span><i class="ar"></i></div>
<div class="r" style="top:199px"><svg width="12" height="16" viewBox="0 0 12 16" style="left:8px;top:0px"><path d="M0.5 0.5H7L11 4.5V15.3H0.5Z" fill="#fff" stroke="#b8b8b8" stroke-width="0.8"/><path d="M7 0.5V4.5H11" fill="#f4f4f4" stroke="#c0c0c0" stroke-width="0.8"/></svg><span>prapx.log</span></div>
<div class="r" style="top:217px"><svg width="16" height="14" viewBox="0 0 16 14" style=""><path d="M0.5 1.3Q0.5 0.5 1.3 0.5H6.2L7.4 2H14.9Q15.5 2 15.5 2.6V13.5H0.5Z" fill="#6bcdf5" stroke="#4daee0" stroke-width="1"/><path d="M1.2 1.4H6" stroke="#9ee0fb" stroke-width="0.9"/><path d="M1.1 12.4H14.9" stroke="#9ee0fb" stroke-width="0.9"/><path d="M1 2.6H15" stroke="#4daee0" stroke-width="0.6" opacity="0.6"/><path d="M8 4L12.2 8.2L8 12.4L3.8 8.2Z" fill="#3a9fd8"/><path d="M8 6.2L10 8.2L8 10.2L6 8.2Z" fill="none" stroke="#8ad6f6" stroke-width="0.7"/></svg><span>Public</span><i class="ar"></i></div></div>
<div class="col" style="left:812px;width:493px;border-right:0"></div>
<div id="pathbar"><svg width="13" height="13" viewBox="0 0 13 13" style="left:13px;top:4px"><defs><linearGradient id="dg" x1="0" y1="0" x2="0" y2="1"><stop offset="0" stop-color="#e6ecef"/><stop offset="0.65" stop-color="#c9cccf"/><stop offset="1" stop-color="#8a8a8a"/></linearGradient></defs><path d="M1.6 0.5H10.6L11.6 9.4V12.2Q11.6 13 10.8 13H1.4Q0.6 13 0.6 12.2V9.4Z" fill="url(#dg)" stroke="#7a7a7a" stroke-width="0.6"/><path d="M2.8 2.3H7.6" stroke="#2e2e2e" stroke-width="1.1"/><ellipse cx="6.1" cy="6.3" rx="2.6" ry="2" fill="#b4b6b8" stroke="#f4f4f4" stroke-width="0.9"/><path d="M1 10.2H11.2" stroke="#1e1e1e" stroke-width="1.4" stroke-dasharray="2.4 0.8"/></svg><span style="left:30px">Macintosh SSD</span><i class="parr" style="left:117px"></i><svg width="16" height="14" viewBox="0 0 16 14" style="left:128px;top:5px;transform:scale(0.875);transform-origin:0 0"><path d="M0.5 1.3Q0.5 0.5 1.3 0.5H6.2L7.4 2H14.9Q15.5 2 15.5 2.6V13.5H0.5Z" fill="#6bcdf5" stroke="#4daee0" stroke-width="1"/><path d="M1.2 1.4H6" stroke="#9ee0fb" stroke-width="0.9"/><path d="M1.1 12.4H14.9" stroke="#9ee0fb" stroke-width="0.9"/><path d="M1 2.6H15" stroke="#4daee0" stroke-width="0.6" opacity="0.6"/><g fill="#3a9fd8"><ellipse cx="8" cy="6.3" rx="1.9" ry="2.3"/><path d="M3.8 11.9Q4 9.3 7 9H9Q12 9.3 12.2 11.9Z"/></g></svg><span style="left:146px">Users</span><i class="parr" style="left:182px"></i><svg width="13" height="12" viewBox="0 0 13 12" style="left:194px;top:6px"><rect x="9" y="0.8" width="1.8" height="3.4" fill="#ebe3d8" stroke="#b9ab9a" stroke-width="0.5"/><path d="M1.6 5.2L6 1.4L10.4 5.2V11.5H1.6Z" fill="#f0f0f0" stroke="#9c9c9c" stroke-width="0.7"/><path d="M0.4 5.6L6 0.6L11.6 5.6" fill="none" stroke="#b07a42" stroke-width="1.6" stroke-linejoin="round" stroke-linecap="round"/><path d="M1.2 11.8H10.8" stroke="#6a6a6a" stroke-width="0.9"/><rect x="4.2" y="7.4" width="3.6" height="4.1" fill="#f0891a"/><circle cx="6" cy="4.8" r="0.95" fill="#4a4a4a"/></svg><span style="left:211px">luisferlante</span></div>
<div id="status"><div class="a" style="left:0;width:1301px;top:5px;line-height:14px;text-align:center">13 items, 25,59 GB available</div></div>
</body></html>
